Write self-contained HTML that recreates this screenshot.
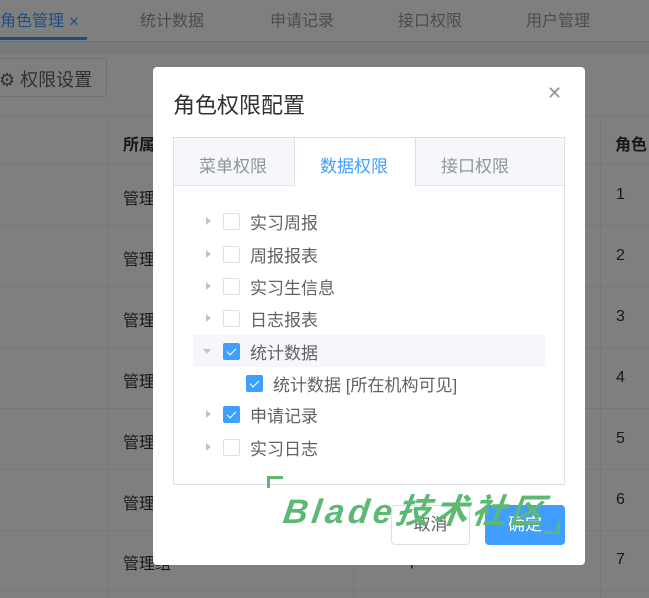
<!DOCTYPE html>
<html><head><meta charset="utf-8"><style>
*{margin:0;padding:0;box-sizing:border-box}
body{width:649px;height:598px;overflow:hidden;position:relative;background:#fff;font-family:"Liberation Sans","Noto Sans CJK SC",sans-serif}
.abs{position:absolute}
.ov{position:absolute;left:0;top:0;width:649px;height:598px;background:rgba(0,0,0,.5)}
.tabtop{font-size:16px;color:#999;top:7px}
.cell{font-size:16px;color:#333}
.hl{position:absolute;left:0;width:649px;height:1px;background:#ebeef5}
.vl{position:absolute;top:115px;width:1px;height:483px;background:#ebeef5}
.modal{position:absolute;left:153px;top:67px;width:432px;height:498px;background:#fff;border-radius:4px}
.cb{position:absolute;width:17px;height:17px;border:1px solid #dcdfe6;border-radius:2px;background:#fff}
.cb.on{background:#409eff;border-color:#409eff}
.cb.on:after{content:"";position:absolute;left:5px;top:2px;width:4px;height:8px;border:solid #fff;border-width:0 1.5px 1.5px 0;transform:rotate(45deg)}
.arr{position:absolute;width:0;height:0;border-top:4px solid transparent;border-bottom:4px solid transparent;border-left:5px solid #c0c4cc}
.arr.dn{border-left:4px solid transparent;border-right:4px solid transparent;border-top:5px solid #c0c4cc;border-bottom:0}
.lbl{position:absolute;font-size:17px;color:#606266}
</style></head><body>
<div class="abs" style="left:0;top:0;width:649px;height:42px;background:#fff;border-bottom:1px solid #e4e7ed"></div>
<div class="abs" style="left:0;top:42px;width:649px;height:12px;background:#f0f2f5"></div>
<div class="abs" style="left:0;top:37px;width:87px;height:3px;background:#409eff"></div>
<div class="abs tabtop" style="left:0;color:#409eff">角色管理 <span style="font-size:13px">✕</span></div>
<div class="abs tabtop" style="left:140px">统计数据</div>
<div class="abs tabtop" style="left:270px">申请记录</div>
<div class="abs tabtop" style="left:398px">接口权限</div>
<div class="abs tabtop" style="left:526px">用户管理</div>
<div class="abs" style="left:-10px;top:58px;width:117px;height:39px;border:1px solid #dcdfe6;border-radius:4px;font-size:18px;color:#606266;padding:7px 0 0 8px">⚙ 权限设置</div>
<div class="hl" style="top:115px"></div><div class="hl" style="top:164px"></div><div class="hl" style="top:225px"></div><div class="hl" style="top:286px"></div><div class="hl" style="top:347px"></div><div class="hl" style="top:408px"></div><div class="hl" style="top:469px"></div><div class="hl" style="top:530px"></div><div class="hl" style="top:590px"></div>
<div class="vl" style="left:108px"></div><div class="vl" style="left:353px"></div><div class="vl" style="left:600px"></div>
<div class="abs cell" style="left:123px;top:131px;font-weight:bold">所属</div>
<div class="abs cell" style="left:615px;top:131px;font-weight:bold">角色</div>
<div class="abs cell" style="left:123px;top:185px">管理</div><div class="abs cell" style="left:123px;top:246px">管理</div><div class="abs cell" style="left:123px;top:307px">管理</div><div class="abs cell" style="left:123px;top:368px">管理</div><div class="abs cell" style="left:123px;top:429px">管理</div><div class="abs cell" style="left:123px;top:490px">管理</div><div class="abs cell" style="left:123px;top:550px">管理组</div>
<div class="abs cell" style="left:370px;top:552px">Principal</div>
<div class="abs cell" style="left:616px;top:186px">1</div><div class="abs cell" style="left:616px;top:247px">2</div><div class="abs cell" style="left:616px;top:308px">3</div><div class="abs cell" style="left:616px;top:369px">4</div><div class="abs cell" style="left:616px;top:430px">5</div><div class="abs cell" style="left:616px;top:491px">6</div><div class="abs cell" style="left:616px;top:551px">7</div>
<div class="ov"></div>
<div class="modal">
 <div class="abs" style="left:20px;top:21px;font-size:22px;color:#303133">角色权限配置</div>
 <div class="abs" style="left:394px;top:16px;font-size:18px;color:#909399">✕</div>
 <div class="abs" style="left:20px;top:70px;width:392px;height:348px;border:1px solid #dcdfe6">
  <div class="abs" style="left:0;top:0;width:390px;height:48px;background:#f5f7fa;border-bottom:1px solid #e4e7ed"></div>
  <div class="abs" style="left:120px;top:0;width:122px;height:49px;background:#fff;border-left:1px solid #dcdfe6;border-right:1px solid #dcdfe6"></div>
  <div class="abs" style="left:25px;top:14px;font-size:17px;color:#909399">菜单权限</div>
  <div class="abs" style="left:146px;top:14px;font-size:17px;color:#409eff">数据权限</div>
  <div class="abs" style="left:267px;top:14px;font-size:17px;color:#909399">接口权限</div>
  <div class="abs" style="left:19px;top:197px;width:352px;height:32px;background:#f5f7fa"></div>
 </div>
 <div class="arr" style="left:53px;top:150px"></div><div class="cb" style="left:70px;top:146px"></div><div class="lbl" style="left:97px;top:142px">实习周报</div>
 <div class="arr" style="left:53px;top:183px"></div><div class="cb" style="left:70px;top:179px"></div><div class="lbl" style="left:97px;top:175px">周报报表</div>
 <div class="arr" style="left:53px;top:215px"></div><div class="cb" style="left:70px;top:211px"></div><div class="lbl" style="left:97px;top:207px">实习生信息</div>
 <div class="arr" style="left:53px;top:247px"></div><div class="cb" style="left:70px;top:243px"></div><div class="lbl" style="left:97px;top:239px">日志报表</div>
 <div class="arr dn" style="left:50px;top:282px"></div><div class="cb on" style="left:70px;top:276px"></div><div class="lbl" style="left:97px;top:272px">统计数据</div>
 <div class="cb on" style="left:93px;top:308px"></div><div class="lbl" style="left:120px;top:304px">统计数据 [所在机构可见]</div>
 <div class="arr" style="left:53px;top:343px"></div><div class="cb on" style="left:70px;top:339px"></div><div class="lbl" style="left:97px;top:335px">申请记录</div>
 <div class="arr" style="left:53px;top:376px"></div><div class="cb" style="left:70px;top:372px"></div><div class="lbl" style="left:97px;top:368px">实习日志</div>
 <div class="abs" style="left:238px;top:438px;width:79px;height:40px;border:1px solid #dcdfe6;border-radius:4px;font-size:17px;color:#606266;text-align:center;line-height:38px">取消</div>
 <div class="abs" style="left:332px;top:438px;width:80px;height:40px;background:#409eff;border-radius:4px;font-size:17px;color:#fff;text-align:center;line-height:40px">确定</div>
</div>
<div class="abs" style="left:267px;top:476px;width:16px;height:12px;border-left:3px solid #5cb874;border-top:3px solid #5cb874"></div>
<div class="abs" style="left:544px;top:522px;width:16px;height:12px;border-right:3px solid #5cb874;border-bottom:3px solid #5cb874"></div>
<div class="abs" style="left:284px;top:484px;font-size:34px;font-weight:bold;font-style:italic;color:#5cb874;letter-spacing:4px;transform:skewX(-8deg);white-space:nowrap">Blade技术社区</div>
</body></html>
